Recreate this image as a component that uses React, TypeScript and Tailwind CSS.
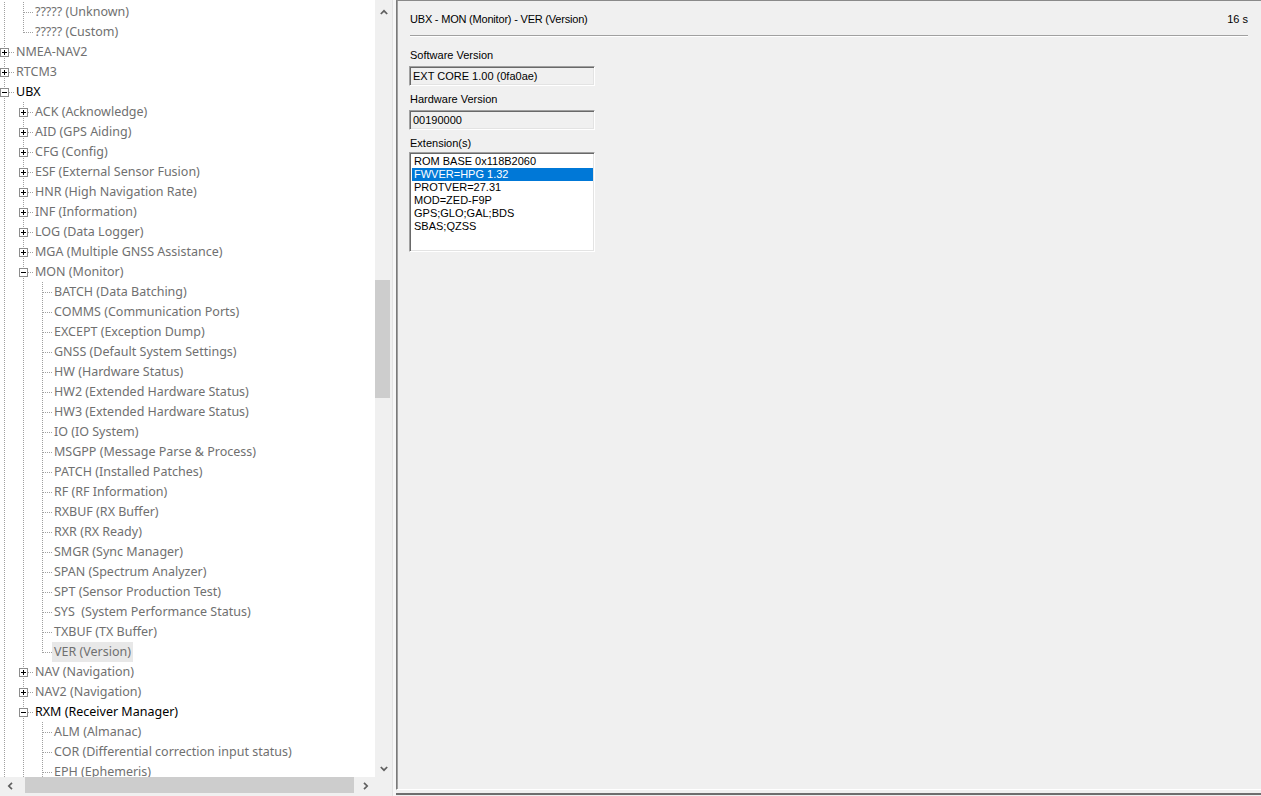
import React from 'react'

type Kind = 'p' | 'm' | 'l'
type Row = { t: string; lv: number; k: Kind; last?: boolean; dark?: boolean; sel?: boolean }

const rows: Row[] = [
  { t: '????? (Unknown)', lv: 1, k: 'l' },
  { t: '????? (Custom)', lv: 1, k: 'l', last: true },
  { t: 'NMEA-NAV2', lv: 0, k: 'p' },
  { t: 'RTCM3', lv: 0, k: 'p' },
  { t: 'UBX', lv: 0, k: 'm', dark: true },
  { t: 'ACK (Acknowledge)', lv: 1, k: 'p' },
  { t: 'AID (GPS Aiding)', lv: 1, k: 'p' },
  { t: 'CFG (Config)', lv: 1, k: 'p' },
  { t: 'ESF (External Sensor Fusion)', lv: 1, k: 'p' },
  { t: 'HNR (High Navigation Rate)', lv: 1, k: 'p' },
  { t: 'INF (Information)', lv: 1, k: 'p' },
  { t: 'LOG (Data Logger)', lv: 1, k: 'p' },
  { t: 'MGA (Multiple GNSS Assistance)', lv: 1, k: 'p' },
  { t: 'MON (Monitor)', lv: 1, k: 'm' },
  { t: 'BATCH (Data Batching)', lv: 2, k: 'l' },
  { t: 'COMMS (Communication Ports)', lv: 2, k: 'l' },
  { t: 'EXCEPT (Exception Dump)', lv: 2, k: 'l' },
  { t: 'GNSS (Default System Settings)', lv: 2, k: 'l' },
  { t: 'HW (Hardware Status)', lv: 2, k: 'l' },
  { t: 'HW2 (Extended Hardware Status)', lv: 2, k: 'l' },
  { t: 'HW3 (Extended Hardware Status)', lv: 2, k: 'l' },
  { t: 'IO (IO System)', lv: 2, k: 'l' },
  { t: 'MSGPP (Message Parse & Process)', lv: 2, k: 'l' },
  { t: 'PATCH (Installed Patches)', lv: 2, k: 'l' },
  { t: 'RF (RF Information)', lv: 2, k: 'l' },
  { t: 'RXBUF (RX Buffer)', lv: 2, k: 'l' },
  { t: 'RXR (RX Ready)', lv: 2, k: 'l' },
  { t: 'SMGR (Sync Manager)', lv: 2, k: 'l' },
  { t: 'SPAN (Spectrum Analyzer)', lv: 2, k: 'l' },
  { t: 'SPT (Sensor Production Test)', lv: 2, k: 'l' },
  { t: 'SYS\u00a0 (System Performance Status)', lv: 2, k: 'l' },
  { t: 'TXBUF (TX Buffer)', lv: 2, k: 'l' },
  { t: 'VER (Version)', lv: 2, k: 'l', last: true, sel: true },
  { t: 'NAV (Navigation)', lv: 1, k: 'p' },
  { t: 'NAV2 (Navigation)', lv: 1, k: 'p' },
  { t: 'RXM (Receiver Manager)', lv: 1, k: 'm', dark: true },
  { t: 'ALM (Almanac)', lv: 2, k: 'l' },
  { t: 'COR (Differential correction input status)', lv: 2, k: 'l' },
  { t: 'EPH (Ephemeris)', lv: 2, k: 'l' },
]

const extensions = ['ROM BASE 0x118B2060', 'FWVER=HPG 1.32', 'PROTVER=27.31', 'MOD=ZED-F9P', 'GPS;GLO;GAL;BDS', 'SBAS;QZSS']

// vertical guide for an ancestor level
function Guide() {
  return (
    <svg width="19" height="20" className="shrink-0" shapeRendering="crispEdges">
      <line x1="9.5" y1="0" x2="9.5" y2="20" stroke="#a0a0a0" strokeDasharray="1 1" />
    </svg>
  )
}

function Connector({ k, last }: { k: Kind; last?: boolean }) {
  return (
    <svg width="19" height="20" className="shrink-0" shapeRendering="crispEdges">
      <line x1="9.5" y1="0" x2="9.5" y2={last ? 11 : 20} stroke="#a0a0a0" strokeDasharray="1 1" />
      <line x1="10" y1="10.5" x2="19" y2="10.5" stroke="#a0a0a0" strokeDasharray="1 1" />
      {k !== 'l' && (
        <>
          <rect x="5.5" y="6.5" width="8" height="8" fill="#fff" stroke="#8c8c8c" />
          <line x1="7" y1="10.5" x2="12" y2="10.5" stroke="#000" />
          {k === 'p' && <line x1="9.5" y1="8" x2="9.5" y2="13" stroke="#000" />}
        </>
      )}
    </svg>
  )
}

function Chevron({ dir }: { dir: 'up' | 'down' | 'left' | 'right' }) {
  const d = {
    up: 'M0.8 5 L4 1.8 L7.2 5',
    down: 'M0.8 1 L4 4.2 L7.2 1',
    left: 'M5 0.8 L1.8 4 L5 7.2',
    right: 'M1 0.8 L4.2 4 L1 7.2',
  }[dir]
  const horiz = dir === 'left' || dir === 'right'
  return (
    <svg width={horiz ? 6 : 8} height={horiz ? 8 : 6} viewBox={horiz ? '0 0 6 8' : '0 0 8 6'}>
      <path d={d} fill="none" stroke="#606060" strokeWidth="1.7" />
    </svg>
  )
}

function TreeRow({ r }: { r: Row }) {
  const guides = Array.from({ length: r.lv })
  return (
    <div className="flex h-[20px] items-center whitespace-nowrap">
      {guides.map((_, i) => (
        <Guide key={i} />
      ))}
      <Connector k={r.k} last={r.last} />
      <span
        className={`px-[2px] leading-[20px] ${r.sel ? 'bg-[#e8e8e8]' : ''} ${r.dark ? 'text-black' : 'text-[#707070]'}`}
      >
        {r.t}
      </span>
    </div>
  )
}

function Field({ value }: { value: string }) {
  return (
    <div className="w-[186px] h-[20px] flex items-center pl-[3px] border border-t-[#a0a0a0] border-l-[#a0a0a0] border-r-white border-b-white shadow-[inset_1px_1px_0_#696969,inset_-1px_-1px_0_#e3e3e3] bg-[#f0f0f0]">
      {value}
    </div>
  )
}

export default function App() {
  return (
    <div className="w-[1261px] h-[796px] flex bg-[#f0f0f0] overflow-hidden">
      {/* Left: message tree */}
      <div className="grid grid-cols-[375px_17px] grid-rows-[777px_19px] shrink-0">
        <div className="bg-white overflow-hidden font-['Noto_Sans',sans-serif] text-[12.5px]">
          <div className="ml-[-5px] pt-[2px]">
            {rows.map((r, i) => (
              <TreeRow key={i} r={r} />
            ))}
          </div>
        </div>

        <div className="flex flex-col bg-[#f0f0f0]">
          <div className="h-[23px] flex items-center justify-center">
            <Chevron dir="up" />
          </div>
          <div className="flex-1">
            <div className="mt-[257px] w-[15px] h-[118px] bg-[#cdcdcd]" />
          </div>
          <div className="h-[17px] flex items-center justify-center">
            <Chevron dir="down" />
          </div>
        </div>

        <div className="flex bg-[#f0f0f0]">
          <div className="w-[20px] flex items-center justify-center pb-[2px]">
            <Chevron dir="left" />
          </div>
          <div className="flex-1 pl-[5px] pr-[3px]">
            <div className="h-[16px] bg-[#cdcdcd]" />
          </div>
          <div className="w-[18px] flex items-center justify-center pb-[2px]">
            <Chevron dir="right" />
          </div>
        </div>
        <div className="bg-[#f0f0f0]" />
      </div>

      {/* Splitter */}
      <div className="w-[4px] shrink-0 border-l border-[#e3e3e3] bg-[#f7f7f7]" />

      {/* Right: message view */}
      <div className="flex-1 flex flex-col font-['Liberation_Sans',Arial,sans-serif] text-[11px] text-black">
        <div className="h-[790px] border-t border-l border-b border-t-[#8a8a8a] border-l-[#7a7a7a] border-b-white shadow-[inset_1px_0_0_#a0a0a0] pl-[12px] pr-[13px]">
          <div className="pt-[10px] flex justify-between leading-[16px] pl-[1px]">
            <span className="tracking-[-0.2px]">UBX - MON (Monitor) - VER (Version)</span>
            <span>16 s</span>
          </div>
          <div className="mt-[8px] ml-[1px] h-[2px] border-t border-[#a0a0a0] border-b border-b-white" />

          <div className="mt-[11px] leading-[14px] pl-[1px]">Software Version</div>
          <div className="mt-[4px]">
            <Field value="EXT CORE 1.00 (0fa0ae)" />
          </div>

          <div className="mt-[6px] leading-[14px] pl-[1px]">Hardware Version</div>
          <div className="mt-[4px]">
            <Field value="00190000" />
          </div>

          <div className="mt-[6px] leading-[14px] pl-[1px]">Extension(s)</div>
          <div className="mt-[2px] w-[186px] h-[100px] border border-t-[#a0a0a0] border-l-[#a0a0a0] border-r-white border-b-white shadow-[inset_1px_1px_0_#696969,inset_-1px_-1px_0_#e3e3e3] bg-white p-[2px] pr-[1px]">
            {extensions.map((e, i) => (
              <div
                key={e}
                className={`h-[13px] leading-[13px] pl-[2px] whitespace-nowrap ${i === 1 ? 'bg-[#0078d7] text-white' : ''}`}
              >
                {e}
              </div>
            ))}
          </div>
        </div>
        <div className="h-[3px]" />
        <div className="h-[2px] bg-[#6e6e6e]" />
      </div>
    </div>
  )
}
